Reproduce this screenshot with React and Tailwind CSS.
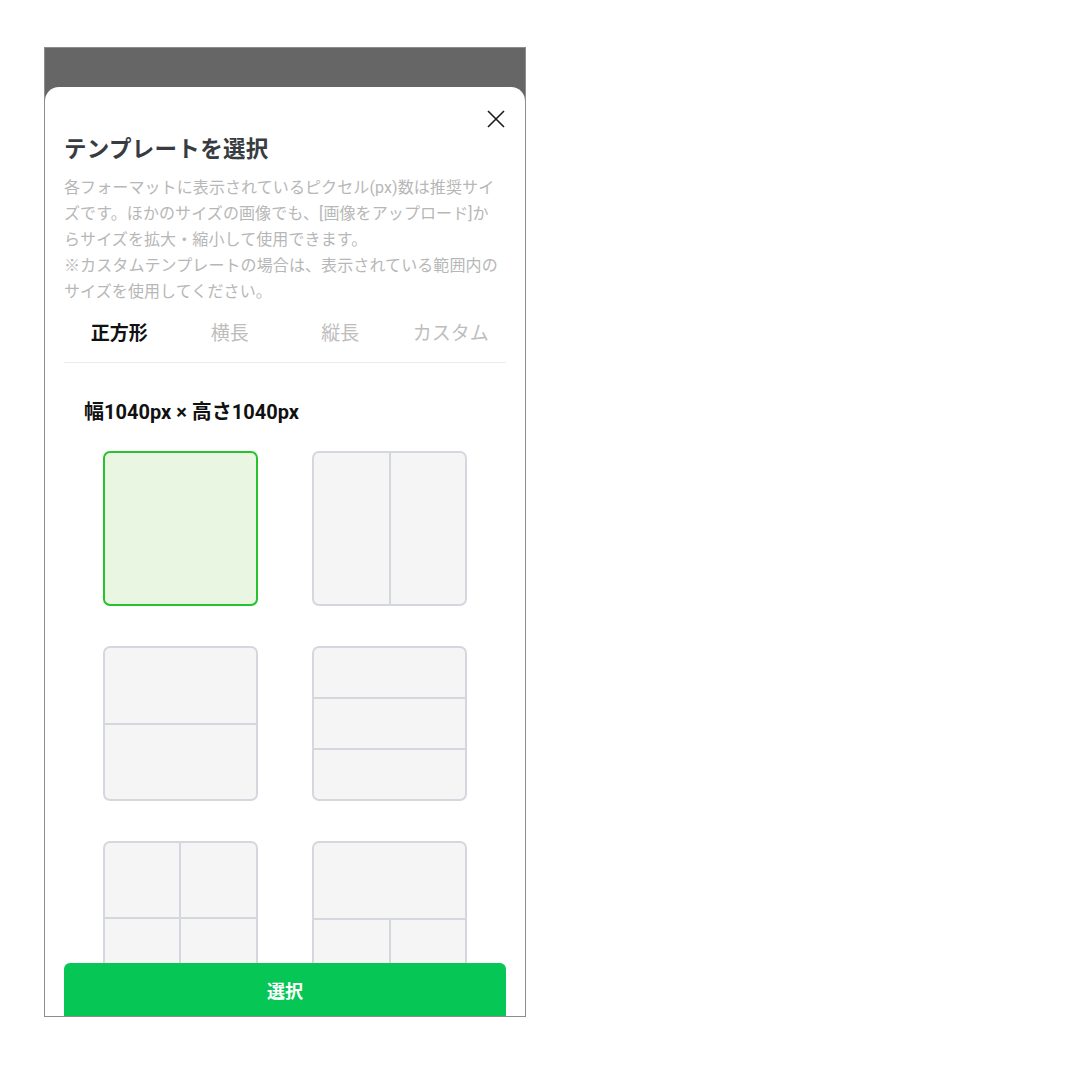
import React from "react";

const FONT = { fontFamily: 'Roboto, "Noto Sans CJK JP", sans-serif' };

function Card({ selected, children }) {
  return (
    <div
      className={
        "w-[155px] h-[155px] rounded-[7px] border-2 overflow-hidden flex " +
        (selected ? "border-[#27c22e] bg-[#e9f6e2]" : "border-[#d4d8de] bg-[#f5f5f5]")
      }
    >
      {children}
    </div>
  );
}

export default function App() {
  return (
    <div className="min-h-[1080px] bg-white" style={FONT}>
      <div className="ml-[44px] pt-[47px]">
        <div className="w-[482px] h-[970px] border border-[#8d8d8d] bg-[#666666] flex flex-col overflow-hidden">
          <div className="mt-[39px] flex-1 bg-white rounded-t-[14px] relative overflow-hidden px-[19px]">
            <div className="flex justify-end pt-[23px] pr-[1px]">
              <svg width="18" height="18" viewBox="0 0 18 18">
                <path d="M1 1 L17 17 M17 1 L1 17" stroke="#1a1a1a" strokeWidth="1.6" fill="none" />
              </svg>
            </div>
            <h1 className="mt-[6px] text-[22.5px] leading-[30px] font-bold text-[#383c41] tracking-[0.3px]">
              テンプレートを選択
            </h1>
            <p className="mt-[11px] text-[16px] leading-[26px] text-[#b7b7b7] whitespace-nowrap tracking-[0.1px]">
              各フォーマットに表示されているピクセル(px)数は推奨サイ
              <br />
              ズです。ほかのサイズの画像でも、[画像をアップロード]か
              <br />
              らサイズを拡大・縮小して使用できます。
              <br />
              ※カスタムテンプレートの場合は、表示されている範囲内の
              <br />
              サイズを使用してください。
            </p>
            <div className="mt-[15px] grid grid-cols-4 pb-[14px] border-b border-[#ebebeb] text-[19px] leading-[28px]">
              <div className="text-center font-bold text-[#111111]">正方形</div>
              <div className="text-center text-[#bdbdbd]">横長</div>
              <div className="text-center text-[#bdbdbd]">縦長</div>
              <div className="text-center text-[#bdbdbd]">カスタム</div>
            </div>
            <div className="mt-[35px] pl-[20px] text-[20px] leading-[28px] font-bold text-[#111111]">
              幅1040px × 高さ1040px
            </div>
            <div className="mt-[25px] mx-auto w-[364px] grid grid-cols-[155px_155px] gap-x-[54px] gap-y-[40px]">
              <Card selected />
              <Card>
                <div className="flex-1 border-r-2 border-[#d4d8de]" />
                <div className="flex-1" />
              </Card>
              <Card>
                <div className="flex-1 flex flex-col">
                  <div className="flex-1 border-b-2 border-[#d4d8de]" />
                  <div className="flex-1" />
                </div>
              </Card>
              <Card>
                <div className="flex-1 flex flex-col">
                  <div className="flex-1 border-b-2 border-[#d4d8de]" />
                  <div className="flex-1 border-b-2 border-[#d4d8de]" />
                  <div className="flex-1" />
                </div>
              </Card>
              <Card>
                <div className="flex-1 grid grid-cols-2 grid-rows-2">
                  <div className="border-r-2 border-b-2 border-[#d4d8de]" />
                  <div className="border-b-2 border-[#d4d8de]" />
                  <div className="border-r-2 border-[#d4d8de]" />
                  <div />
                </div>
              </Card>
              <Card>
                <div className="flex-1 flex flex-col">
                  <div className="flex-1 border-b-2 border-[#d4d8de]" />
                  <div className="flex-1 flex">
                    <div className="flex-1 border-r-2 border-[#d4d8de]" />
                    <div className="flex-1" />
                  </div>
                </div>
              </Card>
            </div>
            <div className="absolute left-[19px] right-[19px] bottom-[-3px] h-[56px] rounded-t-[6px] bg-[#06c755] flex items-center justify-center text-white font-bold text-[18px]">
              選択
            </div>
          </div>
        </div>
      </div>
    </div>
  );
}
